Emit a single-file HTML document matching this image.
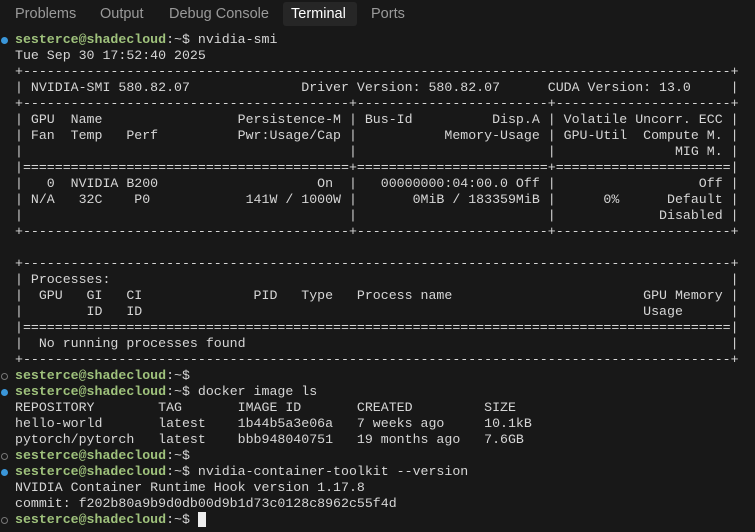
<!DOCTYPE html>
<html><head><meta charset="utf-8"><style>
html,body{margin:0;padding:0;background:#181818;width:755px;height:532px;overflow:hidden}
.tabs{position:absolute;left:0;top:0;width:755px;height:28px;font-family:"Liberation Sans",sans-serif;font-size:14.5px;color:#9a9a9a}
.tab{position:absolute;top:6px}
.term{position:absolute;left:283px;top:2px;width:74px;height:24px;background:#262626;border-radius:3px}
pre{position:absolute;left:15px;top:32px;margin:0;font-family:"Liberation Mono",monospace;font-size:13.25px;line-height:16px;color:#d6d6d6;white-space:pre}
.p{color:#9fc27c;font-weight:bold}
.dot{position:absolute;left:1px;width:7px;height:7px;border-radius:50%;box-sizing:border-box}
.b{background:#3a96d9}
.o{border:1px solid #777}
.cur{background:#eee;color:#eee}
</style></head><body>
<div class="tabs">
<span class="tab" style="left:15px">Problems</span>
<span class="tab" style="left:100px">Output</span>
<span class="tab" style="left:169px">Debug Console</span>
<div class="term"></div>
<span class="tab" style="left:291px;color:#fff">Terminal</span>
<span class="tab" style="left:371px">Ports</span>
</div>
<div class="dot b" style="top:37px"></div>
<div class="dot o" style="top:373px"></div>
<div class="dot b" style="top:389px"></div>
<div class="dot o" style="top:453px"></div>
<div class="dot b" style="top:469px"></div>
<div class="dot o" style="top:517px"></div>
<pre><span class="p">sesterce@shadecloud</span>:~$ nvidia-smi
Tue Sep 30 17:52:40 2025
+-----------------------------------------------------------------------------------------+
| NVIDIA-SMI 580.82.07              Driver Version: 580.82.07      CUDA Version: 13.0     |
+-----------------------------------------+------------------------+----------------------+
| GPU  Name                 Persistence-M | Bus-Id          Disp.A | Volatile Uncorr. ECC |
| Fan  Temp   Perf          Pwr:Usage/Cap |           Memory-Usage | GPU-Util  Compute M. |
|                                         |                        |               MIG M. |
|=========================================+========================+======================|
|   0  NVIDIA B200                    On  |   00000000:04:00.0 Off |                  Off |
| N/A   32C    P0            141W / 1000W |       0MiB / 183359MiB |      0%      Default |
|                                         |                        |             Disabled |
+-----------------------------------------+------------------------+----------------------+

+-----------------------------------------------------------------------------------------+
| Processes:                                                                              |
|  GPU   GI   CI              PID   Type   Process name                        GPU Memory |
|        ID   ID                                                               Usage      |
|=========================================================================================|
|  No running processes found                                                             |
+-----------------------------------------------------------------------------------------+
<span class="p">sesterce@shadecloud</span>:~$
<span class="p">sesterce@shadecloud</span>:~$ docker image ls
REPOSITORY        TAG       IMAGE ID       CREATED         SIZE
hello-world       latest    1b44b5a3e06a   7 weeks ago     10.1kB
pytorch/pytorch   latest    bbb948040751   19 months ago   7.6GB
<span class="p">sesterce@shadecloud</span>:~$
<span class="p">sesterce@shadecloud</span>:~$ nvidia-container-toolkit --version
NVIDIA Container Runtime Hook version 1.17.8
commit: f202b80a9b9d0db00d9b1d73c0128c8962c55f4d
<span class="p">sesterce@shadecloud</span>:~$ <span class="cur"> </span></pre>
</body></html>
